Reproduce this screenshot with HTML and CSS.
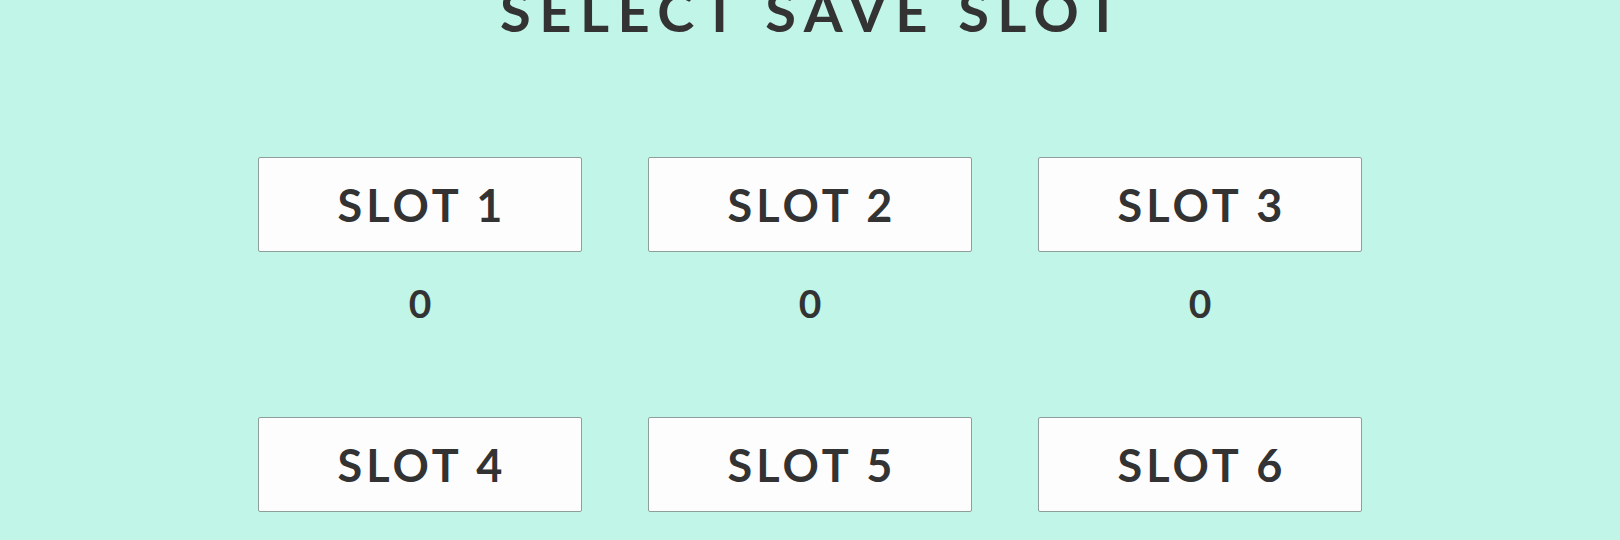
FILE: index.html
```html
<!DOCTYPE html>
<html lang="en">
<head>
<meta charset="utf-8">
<title>Select Save Slot</title>
<link rel="stylesheet" href="styles.css">
</head>
<body>
<header class="header">
  <h1 class="title">SELECT SAVE SLOT</h1>
</header>
<main class="slots">
  <div class="slot"><button class="slot-btn">SLOT 1</button><div class="slot-count">0</div></div>
  <div class="slot"><button class="slot-btn">SLOT 2</button><div class="slot-count">0</div></div>
  <div class="slot"><button class="slot-btn">SLOT 3</button><div class="slot-count">0</div></div>
  <div class="slot"><button class="slot-btn">SLOT 4</button><div class="slot-count">0</div></div>
  <div class="slot"><button class="slot-btn">SLOT 5</button><div class="slot-count">0</div></div>
  <div class="slot"><button class="slot-btn">SLOT 6</button><div class="slot-count">0</div></div>
</main>
</body>
</html>
```
FILE: styles.css
```css
html, body {
  margin: 0;
  padding: 0;
}
body {
  background: #c0f5e8;
  color: #333333;
  font-family: "Lato", "Open Sans", sans-serif;
  overflow: hidden;
  height: 540px;
}
.header {
  height: 157px;
  display: flex;
  justify-content: center;
}
.title {
  margin: -17px 0 0 8px;
  font-size: 56px;
  line-height: 56px;
  font-weight: 700;
  letter-spacing: 8.5px;
  height: 56px;
}
.slots {
  width: 1104px;
  margin: 0 auto;
  display: grid;
  grid-template-columns: repeat(3, 324px);
  column-gap: 66px;
  row-gap: 73px;
}
.slot {
  display: flex;
  flex-direction: column;
  align-items: stretch;
}
.slot-btn {
  height: 95px;
  box-sizing: border-box;
  background: #fdfdfd;
  border: 1px solid #8e9e9a;
  border-radius: 2px;
  font-family: inherit;
  color: #333333;
  font-size: 45px;
  font-weight: 700;
  letter-spacing: 4px;
  padding: 0 0 0 4px;
  cursor: pointer;
}
.slot-count {
  box-sizing: border-box;
  height: 92px;
  padding-top: 10px;
  line-height: 82px;
  text-align: center;
  font-size: 39px;
  font-weight: 700;
}
```
